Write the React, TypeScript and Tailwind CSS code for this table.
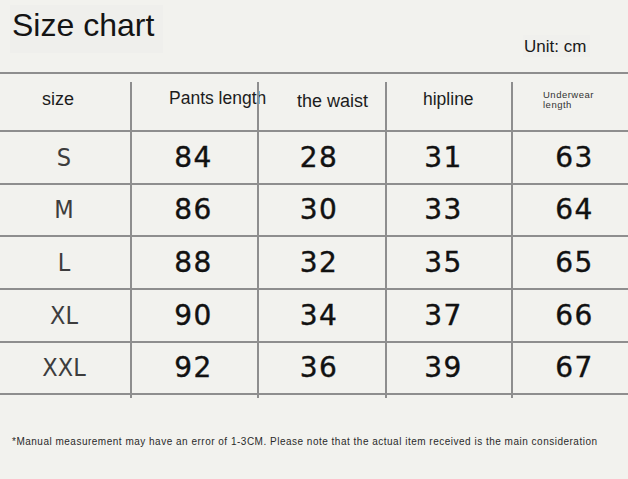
const rows = [
  { size: "S", vals: ["84", "28", "31", "63"], h: "h-[53px]" },
  { size: "M", vals: ["86", "30", "33", "64"], h: "h-[52px]" },
  { size: "L", vals: ["88", "32", "35", "65"], h: "h-[53px]" },
  { size: "XL", vals: ["90", "34", "37", "66"], h: "h-[53px]" },
  { size: "XXL", vals: ["92", "36", "39", "67"], h: "h-[52px]" },
];

const cols = "grid grid-cols-[130px_127px_128px_126px_1fr]";
// nudge each value column the way the picture sits off-centre
const nudge = ["pr-[2px]", "pr-[6px]", "pr-[11px]", "pl-[8px]"];

function HeaderCell({ children, divider = true, className = "" }: { children: React.ReactNode; divider?: boolean; className?: string }) {
  return (
    <div className="flex h-full">
      {divider && <div className="w-[2px] mt-[8px] bg-[#8e8e8e] shrink-0 relative z-10" />}
      <div className={"flex-1 whitespace-nowrap " + className}>{children}</div>
    </div>
  );
}

export default function App() {
  return (
    <div className="w-[628px] h-[479px] bg-[#f2f2ee] overflow-hidden font-['Liberation_Sans',Arial,sans-serif] text-[#111]">
      {/* title */}
      <div className="h-[72px] flex justify-between">
        <div className="ml-[10px] mt-[5px] w-[153px] h-[48px] bg-[#efefec]">
          <div className="pl-[2px] pt-[2px] text-[32px] leading-[36px] text-[#141414]">Size chart</div>
        </div>
        <div className="mt-[35px] mr-[38px] w-[67px] h-[22px] bg-[#f0f0ed]">
          <div className="pl-[1px] pt-[1px] text-[17px] leading-[22px] text-[#1a1a1a]">Unit: cm</div>
        </div>
      </div>

      {/* table */}
      <div className="border-t-2 border-[#8e8e8e]">
        <div className={cols + " h-[58px] border-b-2 border-[#8e8e8e] text-[18px] leading-[20px] text-[#1c1c1c]"}>
          <HeaderCell divider={false} className="pl-[42px] pt-[15px]">size</HeaderCell>
          <HeaderCell className="pl-[37px] pt-[14px] text-[17.5px]">Pants length</HeaderCell>
          <HeaderCell className="pl-[38px] pt-[17px]">the waist</HeaderCell>
          <HeaderCell className="pl-[36px] pt-[15px] text-[17.5px]">hipline</HeaderCell>
          <HeaderCell className="pl-[30px] pt-[16px]">
            <div className="text-[9.5px] leading-[10px] tracking-[0.5px] text-[#333]">
              Underwear
              <br />
              length
            </div>
          </HeaderCell>
        </div>

        {rows.map((r) => (
          <div key={r.size} className={cols + " " + r.h + " border-b-2 border-[#8e8e8e]"}>
            <div className="flex items-center justify-center font-['DejaVu_Sans_Condensed','DejaVu_Sans',sans-serif] text-[25px] text-[#3d3d3d] pr-[2px]">
              {r.size}
            </div>
            {r.vals.map((v, i) => (
              <div
                key={i}
                className={
                  "flex items-center justify-center border-l-2 border-[#8e8e8e] font-['DejaVu_Sans',sans-serif] text-[28px] tracking-[1.5px] text-[#111] [-webkit-text-stroke:0.4px_#111] " +
                  nudge[i]
                }
              >
                {v}
              </div>
            ))}
          </div>
        ))}
        <div className={cols + " h-[3px]"}>
          <div />
          <div className="border-l-2 border-[#8e8e8e]" />
          <div className="border-l-2 border-[#8e8e8e]" />
          <div className="border-l-2 border-[#8e8e8e]" />
          <div className="border-l-2 border-[#8e8e8e]" />
        </div>
      </div>

      {/* note */}
      <div className="mt-[38px] pl-[12px] text-[10px] leading-[12px] tracking-[0.5px] text-[#2a2a2a] whitespace-nowrap">
        *Manual measurement may have an error of 1-3CM. Please note that the actual item received is the main consideration
      </div>
    </div>
  );
}
